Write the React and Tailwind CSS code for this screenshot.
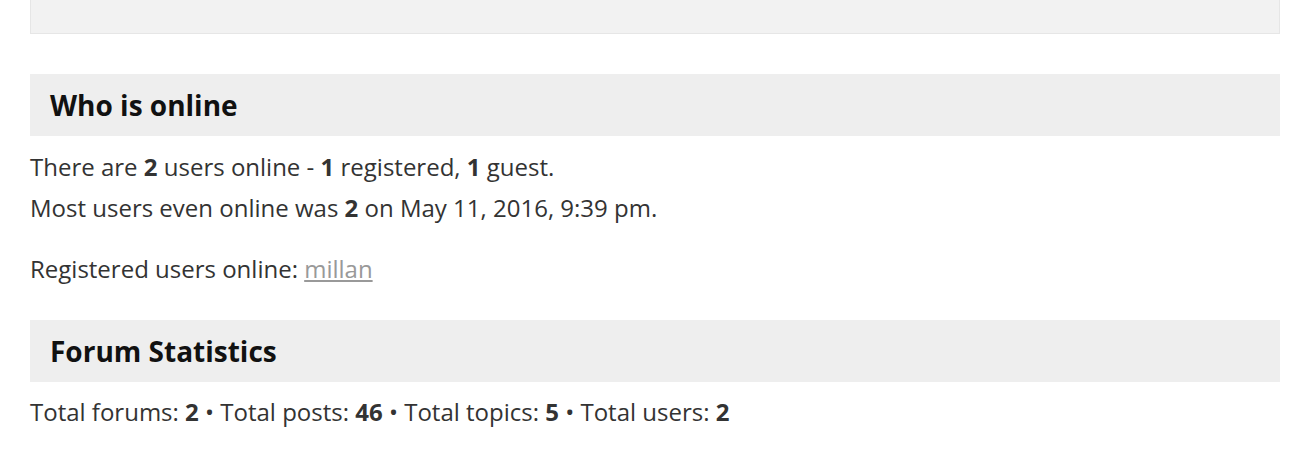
export default function App() {
  return (
    <div className="bg-white min-h-[460px] pl-[30px] pr-[20px] text-[#333] text-[24px]" style={{ fontFamily: '"Open Sans", sans-serif' }}>
      <div className="h-[34px] bg-[#f2f2f2] border-x border-b border-[#e6e6e6]" />

      <div className="mt-[40px] h-[62px] bg-[#eeeeee] px-[20px] flex items-center">
        <h2 className="text-[28px] font-bold text-[#111]">Who is online</h2>
      </div>
      <div className="mt-[10px] leading-[41px]">
        <p>
          There are <b>2</b> users online - <b>1</b> registered, <b>1</b> guest.
        </p>
        <p>
          Most users even online was <b>2</b> on May 11, 2016, 9:39 pm.
        </p>
        <p className="mt-[20px]">
          Registered users online:{' '}
          <a href="#" className="text-[#999] underline">millan</a>
        </p>
      </div>

      <div className="mt-[31px] h-[62px] bg-[#eeeeee] px-[20px] flex items-center">
        <h2 className="text-[28px] font-bold text-[#111]">Forum Statistics</h2>
      </div>
      <p className="mt-[9px] leading-[41px]">
        Total forums: <b>2</b> • Total posts: <b>46</b> • Total topics: <b>5</b> • Total users: <b>2</b>
      </p>
    </div>
  );
}
